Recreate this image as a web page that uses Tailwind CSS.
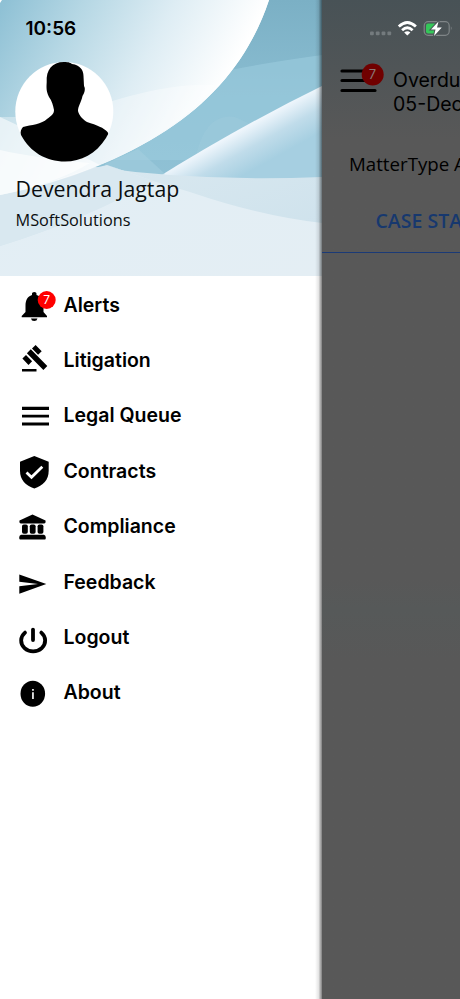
<!DOCTYPE html>
<html lang="en">
<head>
<meta charset="utf-8">
<title>Menu</title>
<script src="https://cdn.jsdelivr.net/npm/@tailwindcss/browser@4"></script>
</head>
<body class="bg-white">
<div class="flex w-[460px] h-[999px] overflow-hidden text-black">
  <aside class="relative w-[322px] shrink-0 bg-white">
    <header class="relative h-[276px] overflow-hidden">
      <svg class="absolute inset-0" width="322" height="276" viewBox="0 0 322 276">
        <defs>
          <linearGradient id="base" x1="0" y1="0" x2="0" y2="1"><stop offset="0" stop-color="#7bb0c5"/><stop offset=".35" stop-color="#8abdd1"/><stop offset="1" stop-color="#96c6d9"/></linearGradient>
          <linearGradient id="disc" gradientUnits="userSpaceOnUse" x1="0" y1="10" x2="205" y2="120"><stop offset="0" stop-color="#8fc1d5"/><stop offset=".3" stop-color="#b5d7e4"/><stop offset=".65" stop-color="#deedf4"/><stop offset="1" stop-color="#fff"/></linearGradient>
          <linearGradient id="beam" gradientUnits="userSpaceOnUse" x1="240" y1="130" x2="260" y2="166"><stop offset="0" stop-color="#eff6fc"/><stop offset=".5" stop-color="#c0dcea"/><stop offset="1" stop-color="#a6cfe1"/></linearGradient>
          <linearGradient id="low" x1="0" y1="0" x2="1" y2="1"><stop offset="0" stop-color="#dceaf1"/><stop offset="1" stop-color="#cbe0eb"/></linearGradient>
          <linearGradient id="pale" x1="0" y1="0" x2="1" y2="1"><stop offset="0" stop-color="#e2eef5"/><stop offset="1" stop-color="#e4eef4"/></linearGradient>
        </defs>
        <rect width="322" height="276" fill="url(#base)"/>
        <path d="M225 71Q270 62 322 55V100L200 160H100Z" fill="#9bcbdd" opacity=".6"/>
        <path d="M195 160Q205 112 235 117L250 124L160 178Z" fill="#a6cfdf" opacity=".25"/>
        <path d="M322 86Q240 126 152 181L322 182Z" fill="url(#beam)"/>
        <path d="M105 164L138 149L165 174L152 181L105 172Z" fill="#a6d0e0" opacity=".5"/>
        <path d="M0 180L95 167Q200 182 322 177V276H0Z" fill="url(#low)"/>
        <path d="M107 165L153 181L190 192Q260 216 322 223V276H0V246Q78 222 152 182Z" fill="url(#pale)"/>
        <path d="M107 165L153 181Q90 218 0 246V190Z" fill="#d9e8f0"/>
        <path d="M269 0C238 93 158 160 0 195V0Z" fill="#fff"/>
        <path d="M269 0C238 93 158 160 0 195V0Z" fill="url(#disc)"/>
        <path d="M0 0H2L0 3Z" fill="#fff"/>
        <path d="M0 195C60 184 160 153 215 85C165 82 100 103 70 117H0Z" fill="#fff" opacity=".35"/>
        <path d="M0 117L60 145L100 165Q55 184 0 195Z" fill="#fff" opacity=".55"/>
        <path d="M0 150Q35 158 90 163Q55 184 0 195Z" fill="#fff" opacity=".6"/>
      </svg>
      <div class="relative flex flex-col pl-[15px]">
        <div class="h-[62px] pl-[10.5px] pt-[16px] font-[Inter,sans-serif] text-[19px] leading-[26px] font-semibold">10:56</div>
        <svg width="99" height="100" viewBox="15 62 99 100">
          <ellipse cx="64.3" cy="111.5" rx="49" ry="49.5" fill="#fff"/>
          <path d="M64 62C69 62 71 63 72 64C80 65 83.500 70 83.500 76L84 86C86 89 84 94 82.500 96C81 103 78 106 78 111C79 116 84 120 87 122C97 125 104 128 107.500 132C109 134 107.500 135 106 138C96 154 81 161.500 65 161.500C46 161.500 30 152 21 135C20 132 21 129 23 127C31 125 42 124 47 119C52 115 54 114 54 110C53 105 52 101 49 97C46 91 46.500 87 46.700 82C46 70 52 62 64 62Z"/>
        </svg>
        <div class="mt-[12px] pl-[0.5px] font-['Open_Sans',sans-serif] text-[21.3px] leading-[30px] text-[#0b0e10] whitespace-nowrap">Devendra Jagtap</div>
        <div class="mt-[4px] pl-[0.5px] font-['Open_Sans',sans-serif] text-[16.3px] leading-[24px] text-[#0b0e10] whitespace-nowrap">MSoftSolutions</div>
      </div>
    </header>
    <nav class="flex flex-col pt-[1px] font-[Inter,sans-serif] text-[19.5px] font-semibold">
      <a class="flex items-center h-[55.4px]"><svg class="w-[63.5px] h-[55.400px] shrink-0" viewBox="0 277 63.500 55.400"><path d="M32 293.500Q32 292 34.300 292T36.500 293.500V295C42 297 43.500 301 43.500 306V312L47 316V317.300H21.700V316L25.500 312V306C25.500 300 27.500 296.500 32 295ZM31 318.500H37.500Q37 321 34.200 321T31 318.500Z"/><circle cx="46.700" cy="300" r="9" fill="#ff0000"/><text x="46.700" y="304.300" text-anchor="middle" font-size="12" font-weight="400" fill="#fff">7</text></svg><span class="pt-[2px]">Alerts</span></a>
      <a class="flex items-center h-[55.4px]"><svg class="w-[63.5px] h-[55.400px] shrink-0" viewBox="0 332.400 63.500 55.400"><path d="M22 369.500H36.500V371.800H22ZM35.600 345.400L41.700 351.600L38.100 355.200L32 349ZM26 355.400L32.100 361.600L28.500 365.300L22.400 359ZM30.800 349.600L47.300 366.500L43.400 370.500L26.900 353.600Z"/></svg><span class="pt-[2px]">Litigation</span></a>
      <a class="flex items-center h-[55.4px]"><svg class="w-[63.5px] h-[55.400px] shrink-0" viewBox="0 387.800 63.500 55.400"><path d="M22 406.500H49V409.700H22ZM22 414.500H49V417.400H22ZM22 422.300H49V425.300H22Z"/></svg><span class="pt-[1px]">Legal Queue</span></a>
      <a class="flex items-center h-[55.4px]"><svg class="w-[63.5px] h-[55.400px] shrink-0" viewBox="0 443.200 63.500 55.400"><path d="M34.300 456.300L48.700 462V471C48.700 480 43 486.200 34.300 488.600C25.500 486 20 480 20 471V462Z"/><path d="M26.500 472.800L31.500 477.500L42.300 467" fill="none" stroke="#fff" stroke-width="2.800"/></svg><span class="pt-[2px]">Contracts</span></a>
      <a class="flex items-center h-[55.4px]"><svg class="w-[63.5px] h-[55.400px] shrink-0" viewBox="0 498.600 63.500 55.400"><path d="M32.500 514L45.500 520Q46 523 44 523H21Q19 523 19.500 520Z"/><rect x="22" y="524" width="5.800" height="9.300" rx="1.800"/><rect x="29.800" y="524" width="5.800" height="9.300" rx="1.800"/><rect x="37.600" y="524" width="5.800" height="9.300" rx="1.800"/><path d="M21 534.300H44Q45.800 534.800 45.800 537T45 539H20Q19.200 539 19.200 537T21 534.300Z"/></svg><span class="pt-[1px]">Compliance</span></a>
      <a class="flex items-center h-[55.4px]"><svg class="w-[63.5px] h-[55.400px] shrink-0" viewBox="0 554 63.500 55.400"><path d="M19.300 574.500L46.300 584L19.300 593.700V586.300L38 584L19.300 581.800Z"/></svg><span class="pt-[2px]">Feedback</span></a>
      <a class="flex items-center h-[55.4px]"><svg class="w-[63.5px] h-[55.400px] shrink-0" viewBox="0 609.400 63.500 55.400"><path d="M33 630V640.500M25 633A12 10.800 0 1 0 41.300 633" fill="none" stroke="#000" stroke-width="3.800" stroke-linecap="round"/></svg><span class="pt-[2px]">Logout</span></a>
      <a class="flex items-center h-[55.4px]"><svg class="w-[63.5px] h-[55.400px] shrink-0" viewBox="0 664.800 63.500 55.400"><ellipse cx="32.800" cy="693.500" rx="12.300" ry="13"/><path d="M32 688.800H33.900V690.600H32ZM32 692.100H33.900V698.700H32Z" fill="#ddd"/></svg><span class="pt-[1px]">About</span></a>
    </nav>
    <div class="absolute right-0 top-0 h-full w-[7px] bg-linear-to-r from-black/0 via-black/10 to-black/50"></div>
  </aside>
  <main class="flex-1 overflow-hidden bg-[#585858] bg-linear-to-b from-[#485256] from-0% via-[#585858] via-[14%] to-[#585858]">
    <div class="h-full bg-linear-to-b from-transparent from-[58%] via-[#565959] via-[61%] to-transparent to-[66%]">
      <div class="flex h-[62px] pt-[20px]">
        <svg width="138" height="18" viewBox="322 20 138 18">
          <g fill="#747b7e"><rect x="370" y="31.500" width="3.800" height="3.800" rx="1"/><rect x="375.800" y="31.500" width="3.800" height="3.800" rx="1"/><rect x="381.600" y="31.500" width="3.800" height="3.800" rx="1"/><rect x="387.400" y="31.500" width="3.800" height="3.800" rx="1"/></g>
          <g fill="none" stroke="#fff" stroke-width="2.800"><path d="M398.800 26.600Q407.300 18.500 415.900 26.600M402.100 30.200Q407.300 25.400 412.600 30.200"/></g>
          <path d="M404.200 32.500Q407.300 29.800 410.400 32.500L407.300 35.600Z" fill="#fff"/>
          <rect x="424.200" y="21.700" width="25" height="13.600" rx="4" fill="none" stroke="#7f8587" stroke-width="1.200"/>
          <path d="M450.900 26.300Q452.600 28.500 450.900 30.700Z" fill="#8d9294"/>
          <path d="M428 23.500H435V33.500H428Q426 33.500 426 31.500V25.500Q426 23.500 428 23.500Z" fill="#34c759"/>
          <path d="M438.500 21.500L431 29.500H435.500L434 36L441.800 27.500H437Z" fill="#fff" stroke="#4c5558" stroke-width="2" paint-order="stroke"/>
        </svg>
      </div>
      <div class="flex h-[68px] font-[Inter,sans-serif]">
        <svg class="w-[71px] h-[40px] shrink-0" viewBox="322 62 71 40"><path d="M342 71H375M342 80.500H375M342 90.500H375" stroke="#000" stroke-width="3.200" stroke-linecap="round"/><circle cx="372.700" cy="74.500" r="11" fill="#700000"/><text x="372.500" y="79" text-anchor="middle" font-size="13" fill="#8a7777">7</text></svg>
        <div class="pt-[5.500px] text-[19.500px] leading-[24px] whitespace-nowrap">Overdue<br>05-Dec-2022</div>
      </div>
      <div class="h-[65px] pl-[27px] pt-[19.500px] font-['Open_Sans',sans-serif] text-[18.700px] leading-[27px] whitespace-nowrap">MatterType All</div>
      <div class="h-[57.5px] pl-[53.500px] pt-[12px] border-b-[1.5px] border-[#1b3a76] font-['Open_Sans',sans-serif] font-semibold text-[19.500px] leading-[27px] text-[#17386e] whitespace-nowrap">CASE STATUS</div>
    </div>
  </main>
</div>
</body>
</html>
